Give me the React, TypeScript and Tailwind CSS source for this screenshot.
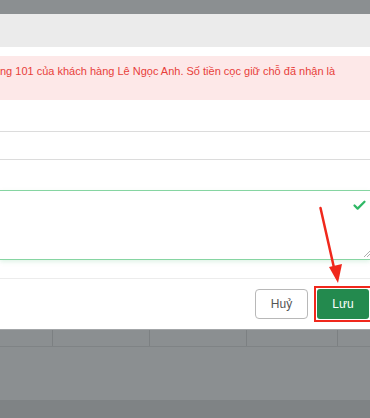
import React from "react";
import { Check } from "lucide-react";

const font = { fontFamily: '"Liberation Sans", Arial, sans-serif' };

const TableStrip = () => {
  const cols = [53, 97, 97, 91, 32];
  return (
    <div className="bg-[#8b8f91]">
      <div className="flex h-[18px] border-t border-[#a3a6a8] border-b border-b-[#7f8385]">
        {cols.map((w, i) => (
          <div
            key={i}
            style={{ width: w }}
            className={i < cols.length - 1 ? "border-r border-[#7c8082]" : ""}
          />
        ))}
      </div>
      <div className="h-[53px]" />
      <div className="h-[18px] bg-[#7f8385]" />
    </div>
  );
};

const App = () => {
  return (
    <div className="relative w-[370px] h-[418px] overflow-hidden bg-white" style={font}>
      {/* overlay strip above the modal */}
      <div className="h-[14px] bg-[#8b8f91]" />

      {/* modal */}
      <div className="bg-white">
        <div className="h-[33px] bg-[#ebebeb]" />
        <div className="h-[9px]" />
        <div className="h-[44px] bg-[#fde8e8] pt-[7px] text-[11px] leading-4 text-[#e8403a] whitespace-nowrap">
          ng 101 của khách hàng Lê Ngọc Anh. Số tiền cọc giữ chỗ đã nhận là
        </div>
        <div className="h-[32px] border-b border-[#dcdcdc]" />
        <div className="h-[28px] border-b border-[#dcdcdc]" />
        <div className="h-[30px]" />
        <div className="relative h-[70px] border-y border-[#86d5a2] shadow-[0_2px_4px_rgba(134,213,162,0.25)]">
          <Check
            size={15}
            strokeWidth={3.6}
            className="absolute right-[3px] top-[7px] text-[#2fb865]"
          />
          <svg
            width="6"
            height="6"
            viewBox="0 0 6 6"
            className="absolute right-0 bottom-[2px]"
          >
            <line x1="0" y1="6" x2="6" y2="0" stroke="#9a9a9a" strokeWidth="0.8" />
            <line x1="3" y1="6" x2="6" y2="3" stroke="#9a9a9a" strokeWidth="0.8" />
          </svg>
        </div>
        <div className="h-[19px] border-b border-[#ececec]" />
        <div className="h-[50px] flex justify-end items-start pt-[10px]">
          <button className="w-[53px] h-[30px] rounded-[4px] border border-[#b8b8b8] bg-white text-[12px] text-[#555]">
            Huỷ
          </button>
          <div className="ml-[6px] -mt-[3px] border-2 border-[#f0281c] p-px w-[58px] h-[36px] -mr-[2px]">
            <button className="w-full h-full rounded-[3px] bg-[#238a4e] text-[12px] text-white">
              Lưu
            </button>
          </div>
        </div>
      </div>

      <TableStrip />

      {/* annotation arrow */}
      <svg
        className="absolute left-0 top-0 pointer-events-none"
        width="370"
        height="418"
        viewBox="0 0 370 418"
      >
        <line x1="320.5" y1="208" x2="334.5" y2="270" stroke="#f0281c" strokeWidth="2.5" strokeLinecap="round" />
        <polygon points="329,267 342,264 338,283" fill="#f0281c" />
      </svg>
    </div>
  );
};

export default App;
